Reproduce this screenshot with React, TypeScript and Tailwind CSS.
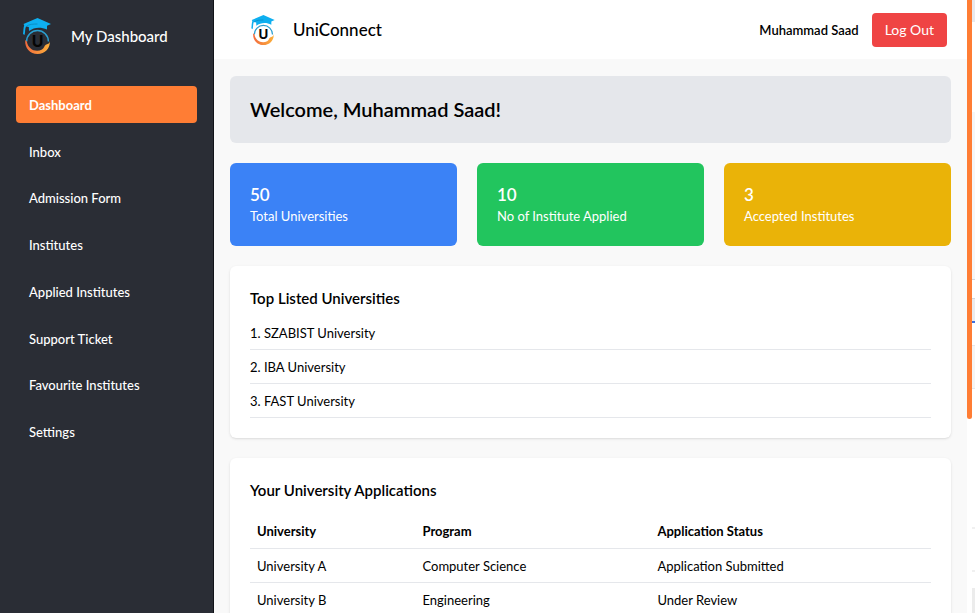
const navItems = ["Dashboard", "Inbox", "Admission Form", "Institutes", "Applied Institutes", "Support Ticket", "Favourite Institutes", "Settings"];

const stats = [
  { value: 50, label: "Total Universities", color: "bg-[#3b82f6]" },
  { value: 10, label: "No of Institute Applied", color: "bg-[#22c55e]" },
  { value: 3, label: "Accepted Institutes", color: "bg-[#eab308]" },
];

const universities = ["SZABIST University", "IBA University", "FAST University"];

const applications = [
  { university: "University A", program: "Computer Science", status: "Application Submitted" },
  { university: "University B", program: "Engineering", status: "Under Review" },
];

function Logo({ id, className }: { id: string; className: string }) {
  return (
    <svg viewBox="0 0 28 36" className={className} aria-hidden="true">
      <defs>
        <linearGradient id={id} x1="0" y1="0" x2="1" y2="0">
          <stop offset="0" stopColor="#f26a3d" />
          <stop offset="1" stopColor="#fbb03b" />
        </linearGradient>
      </defs>
      <path d="M3.600 23.500A10.900 10.900 0 0 1 25.400 23.500" fill="none" stroke="#2b9fd0" strokeWidth="1.500" />
      <path d="M2.200 22C1.500 30 7 36 14.500 36C22 36 27.500 30 26.800 23C26.300 26.500 24.500 25.800 22.800 26.800C21 28 21.500 30 19 31.500C13 34.800 5 31.500 3.800 23.500Z" fill={`url(#${id})`} />
      <path d="M14.500 0L28 6L24 7.800L24 11.600C18 8.600 11 9 6 13L5.800 9L3 8.500C1.800 11 2.500 14 1.500 17L0 16C0.500 13 0.300 10 1.200 7.300L0.500 6Z" fill="#0eaff0" />
      <path d="M3.500 8.200C6 6.300 10 6 14.500 6" fill="none" stroke="#087fb3" strokeWidth="0.700" />
      <text x="14.500" y="29" textAnchor="middle" fontFamily="Inter, sans-serif" fontSize="16" fontWeight="700" fill="#050505">U</text>
    </svg>
  );
}

export default function App() {
  return (
    <div className="flex h-screen overflow-hidden bg-white font-[Lato,sans-serif] text-[13px] leading-5 text-black">
      <aside className="w-[214px] shrink-0 border-r border-[#111318] bg-[#2a2d35] px-4 text-white">
        <div className="flex h-[86px] items-start gap-5 pt-[18px] pl-[7px]">
          <Logo id="sidebar-ring" className="h-9 w-7 shrink-0" />
          <h2 className="text-[15px] leading-9 font-medium">My Dashboard</h2>
        </div>
        <nav className="grid h-[364px] auto-rows-fr gap-[10px]">
          {navItems.map((item, i) => (
            <a key={item} href="#" className={`flex items-center rounded px-[13px] pt-px ${i === 0 ? "bg-[#ff7d34] font-bold" : "font-medium"}`}>
              {item}
            </a>
          ))}
        </nav>
      </aside>

      <div className="flex min-w-0 flex-1 flex-col bg-[#f9f9f9]">
        <header className="flex h-[59px] shrink-0 items-center justify-between bg-white pr-5 pl-[37px]">
          <div className="flex items-center gap-[18px]">
            <Logo id="header-ring" className="h-[30px] w-6" />
            <h1 className="text-[17px] leading-6 font-medium">UniConnect</h1>
          </div>
          <div className="flex items-center gap-[13px]">
            <span className="font-semibold">Muhammad Saad</span>
            <button type="button" className="rounded bg-[#ef4444] px-[13px] py-[7px] text-[14px] text-white">Log Out</button>
          </div>
        </header>

        <main className="flex flex-col gap-5 overflow-hidden px-4 pt-[17px]">
          <section className="shrink-0 rounded-md bg-[#e5e7eb] p-5">
            <h2 className="text-[20px] leading-[27px] font-semibold">Welcome, Muhammad Saad!</h2>
          </section>

          <section className="grid shrink-0 grid-cols-3 gap-5">
            {stats.map((s) => (
              <div key={s.label} className={`rounded-md p-5 text-white ${s.color}`}>
                <p className="text-[17px] leading-[23px] font-semibold">{s.value}</p>
                <p>{s.label}</p>
              </div>
            ))}
          </section>

          <section className="shrink-0 rounded-md bg-white p-5 shadow-sm">
            <h3 className="text-[15px] leading-6 font-semibold">Top Listed Universities</h3>
            <ul className="mt-[6px]">
              {universities.map((u, i) => (
                <li key={u} className="border-b border-gray-200 pt-[7px] pb-[6px]">{i + 1}. {u}</li>
              ))}
            </ul>
          </section>

          <section className="shrink-0 rounded-md bg-white p-5 shadow-sm">
            <h3 className="text-[15px] leading-6 font-semibold">Your University Applications</h3>
            <table className="mt-3 w-full table-fixed border-collapse text-left">
              <thead>
                <tr className="h-[34px] border-b border-gray-200">
                  <th className="w-[24.3%] px-[7px] pt-px">University</th>
                  <th className="w-[34.5%] px-[7px] pt-px">Program</th>
                  <th className="px-[7px] pt-px">Application Status</th>
                </tr>
              </thead>
              <tbody>
                {applications.map((a) => (
                  <tr key={a.university} className="h-[34px] border-b border-gray-200">
                    <td className="px-[7px] pt-px">{a.university}</td>
                    <td className="px-[7px] pt-px">{a.program}</td>
                    <td className="px-[7px] pt-px">{a.status}</td>
                  </tr>
                ))}
              </tbody>
            </table>
          </section>
        </main>
      </div>

      <div className="flex w-2 shrink-0 bg-white">
        <div className="h-[419px] w-[5px] rounded-b-full bg-[#ff7d34]" />
        <div className="flex flex-1 flex-col">
          <div className="h-[22px] bg-[#e9eaee]" />
          <div className="mt-[90px] h-[168px] border-b border-gray-300 bg-[#f5f6f8]" />
          <div className="mt-[18px] h-[23px] border-t border-gray-300 bg-[#ececee]" />
          <div className="h-[2px] bg-[#3b6fe0]" />
          <div className="mt-[22px] h-11 border-y border-gray-200 bg-[#f5f5f5]" />
          <div className="mt-[138px] h-[45px] border-y-2 border-[#f0f0f0]" />
          <div className="mt-[16px] flex-1 bg-[#ececec]" />
        </div>
      </div>
    </div>
  );
}
